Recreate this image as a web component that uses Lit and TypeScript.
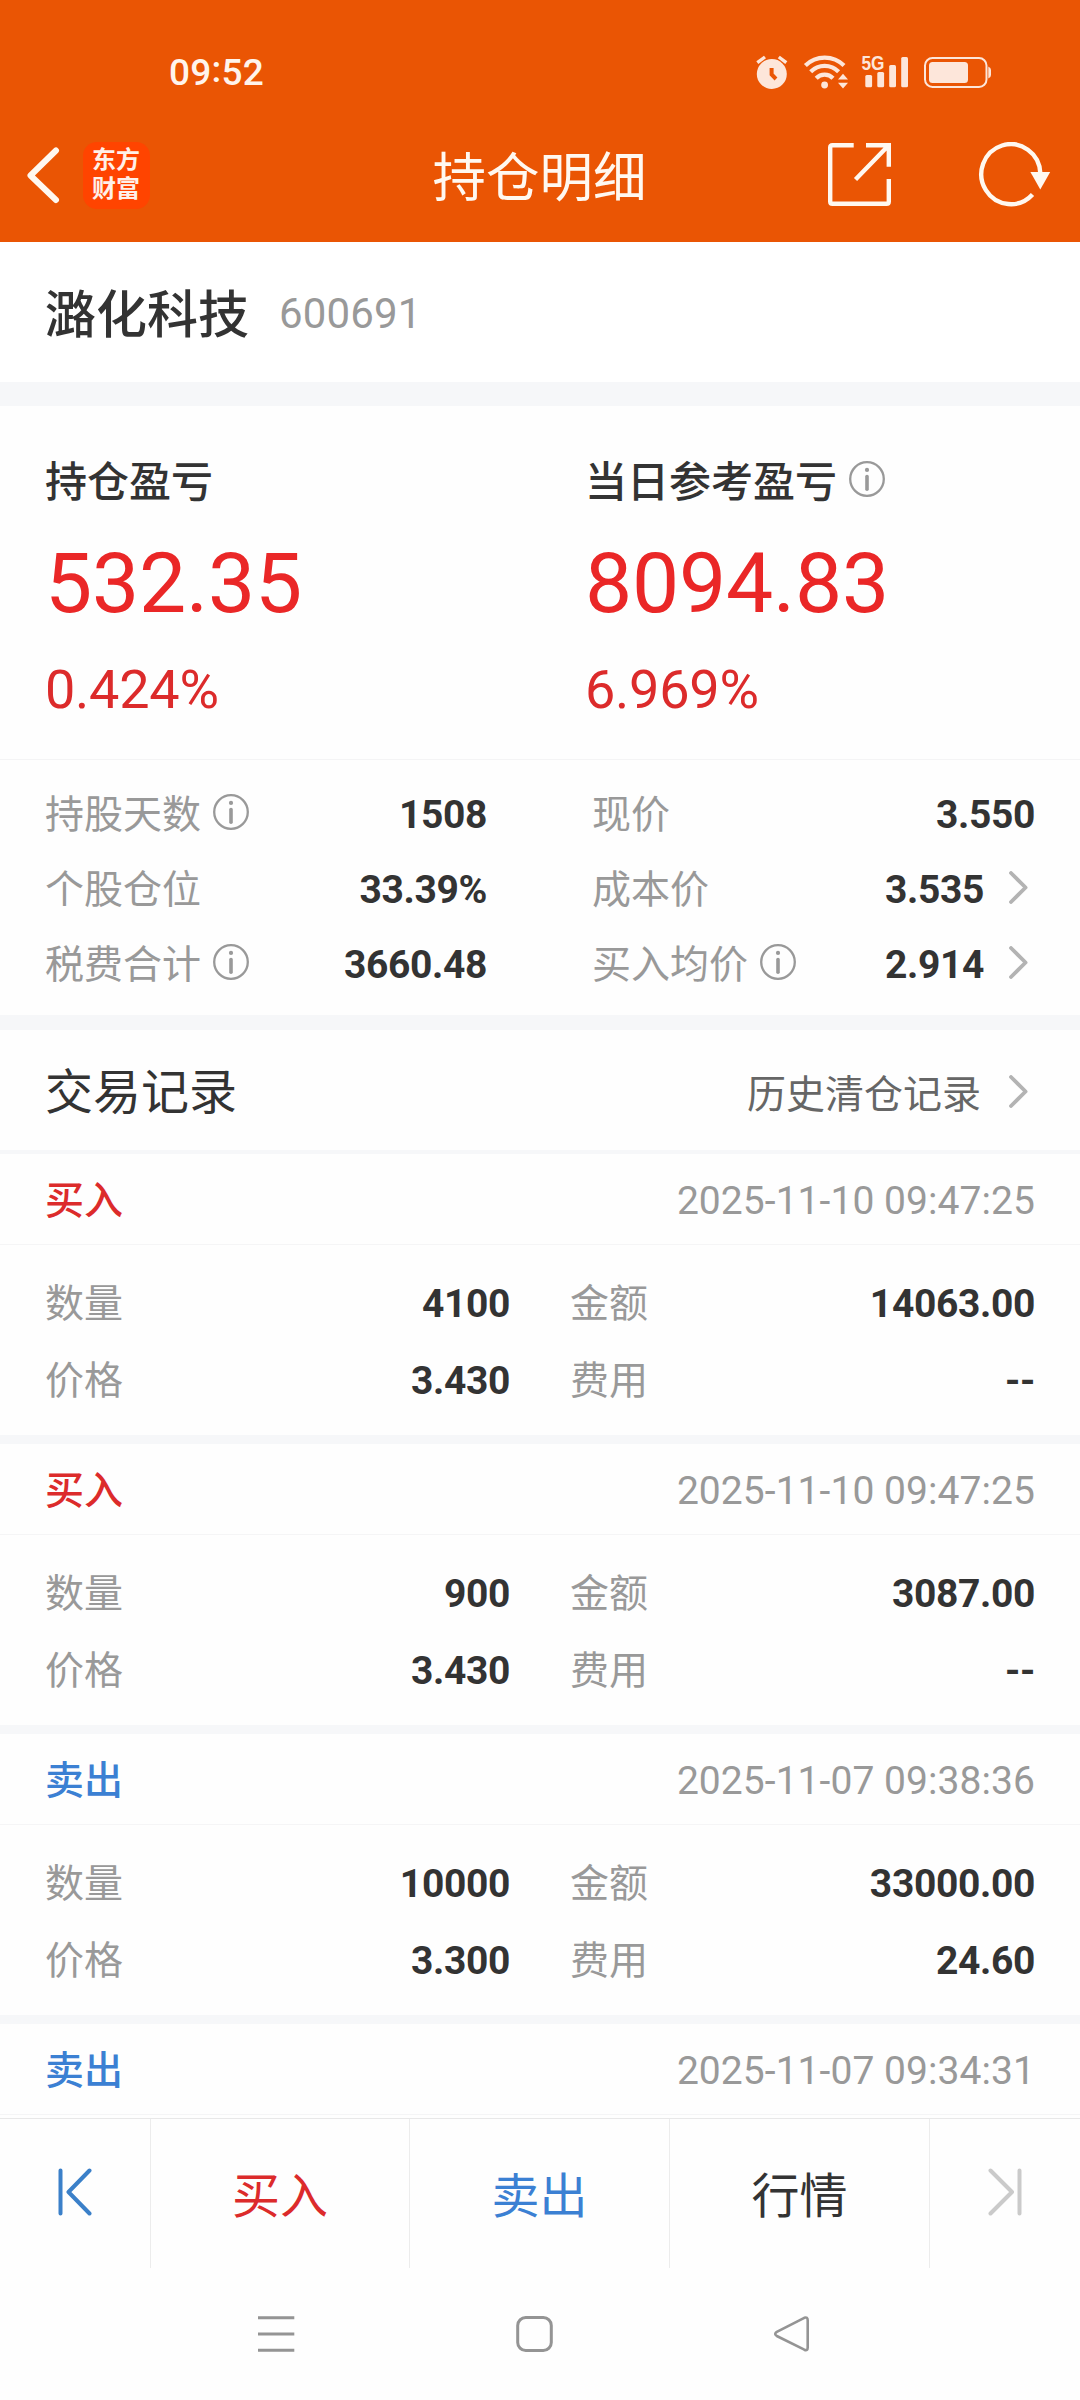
import { LitElement, html, css, svg } from "lit";
import { customElement, property } from "lit/decorators.js";

interface Stat {
  label: string;
  value: string;
  info?: boolean;
  link?: boolean;
}

interface Trade {
  side: "buy" | "sell";
  time: string;
  quantity: string;
  price: string;
  amount: string;
  fee: string;
}

const LEFT_STATS: Stat[] = [
  { label: "持股天数", value: "1508", info: true },
  { label: "个股仓位", value: "33.39%" },
  { label: "税费合计", value: "3660.48", info: true },
];

const RIGHT_STATS: Stat[] = [
  { label: "现价", value: "3.550" },
  { label: "成本价", value: "3.535", link: true },
  { label: "买入均价", value: "2.914", info: true, link: true },
];

const TRADES: Trade[] = [
  { side: "buy", time: "2025-11-10 09:47:25", quantity: "4100", price: "3.430", amount: "14063.00", fee: "--" },
  { side: "buy", time: "2025-11-10 09:47:25", quantity: "900", price: "3.430", amount: "3087.00", fee: "--" },
  { side: "sell", time: "2025-11-07 09:38:36", quantity: "10000", price: "3.300", amount: "33000.00", fee: "24.60" },
  { side: "sell", time: "2025-11-07 09:34:31", quantity: "", price: "", amount: "", fee: "" },
];

const infoIcon = html`<svg class="info" width="36" height="36" viewBox="0 0 36 36" fill="none" stroke="#999">
  <circle cx="18" cy="18" r="16.8" stroke-width="2.3" />
  <circle cx="18" cy="8.9" r="2.1" fill="#999" stroke="none" />
  <path d="M18 15.6V28.2" stroke-width="3.6" stroke-linecap="round" />
</svg>`;

const arrowIcon = html`<svg class="arrow" width="19" height="33" viewBox="0 0 19 33" fill="none">
  <path d="M2 2L16.6 16.5L2 31" stroke="#b3b3b3" stroke-width="3.8" stroke-linecap="round" stroke-linejoin="round" />
</svg>`;

@customElement("status-bar")
class StatusBar extends LitElement {
  static styles = css`
    :host {
      display: flex;
      align-items: center;
      height: 56px;
      padding: 45px 88px 0 169px;
      color: #fff4ec;
    }
    .time {
      font: 500 37px/56px Roboto, "Noto Sans CJK SC", sans-serif;
      letter-spacing: 0.2px;
      flex: 1;
    }
    .colon {
      position: relative;
      top: -3px;
    }
    svg {
      display: block;
    }
    .net {
      font: 700 20px "Liberation Sans", sans-serif;
    }
  `;
  render() {
    return html`
      <span class="time">09<span class="colon">:</span>52</span>
      <svg width="237" height="56" viewBox="755 45 237 56" fill="#fde6da">
        <circle cx="771.8" cy="74" r="15" />
        <path d="M757.3 62.6L765 57M786.3 62.6L778.8 57" stroke="#fde6da" stroke-width="3.4" />
        <path d="M771.6 68V74.5L776 79" stroke="#ea5504" stroke-width="4" fill="none" />
        <g fill="none" stroke="#fde6da" stroke-width="4.2">
          <path d="M805.4 65.5A27.5 27.5 0 0 1 844 65.5" />
          <path d="M810.7 71.8A19.5 19.5 0 0 1 838.6 71.8" />
          <path d="M816.2 78.2A11.5 11.5 0 0 1 833 78.2" />
        </g>
        <circle cx="824.6" cy="85" r="3.4" />
        <path d="M838 79.5L843 73.8L848 79.5ZM838 82.8L843 88.5L848 82.8Z" />
        <text class="net" x="861.5" y="70" textLength="23" lengthAdjust="spacingAndGlyphs">5G</text>
        <rect x="865.3" y="75" width="6.8" height="12.3" rx="1.5" />
        <rect x="877.3" y="72" width="6.8" height="15.3" rx="1.5" />
        <rect x="889.2" y="65" width="6.8" height="22.3" rx="1.5" />
        <rect x="901.2" y="57" width="6.8" height="30.3" rx="1.5" />
        <rect x="925" y="58" width="61.5" height="29" rx="7.5" fill="none" stroke="#fde6da" stroke-width="2" />
        <rect x="929" y="62" width="39" height="21" rx="3.5" />
        <path d="M988.3 66.5Q991 67.5 991 70V75Q991 77.5 988.3 78.5Z" />
      </svg>
    `;
  }
}

@customElement("nav-header")
class NavHeader extends LitElement {
  static styles = css`
    :host {
      display: grid;
      grid-template-columns: 1fr auto 1fr;
      grid-template-rows: 68px;
      align-items: center;
      height: 68px;
      padding: 40px 29px 33px 26px;
      color: #fff8f0;
    }
    svg {
      display: block;
    }
    .left {
      display: flex;
      align-items: center;
      gap: 23px;
    }
    .logo {
      box-sizing: border-box;
      width: 67px;
      height: 67px;
      padding: 3px 1px 0 0;
      border-radius: 14px;
      background: #ff4400;
      color: #fff0e8;
      text-align: center;
      font: 700 24px/29px "Liberation Sans", "Noto Sans CJK SC", sans-serif;
    }
    .title {
      font: 400 53.5px/60px Roboto, "Noto Sans CJK SC", sans-serif;
      padding: 8px 0 0 2px;
    }
    .right {
      display: flex;
      align-items: center;
      justify-content: flex-end;
      gap: 86px;
    }
  `;
  render() {
    return html`
      <div class="left">
        <svg width="34" height="58" viewBox="0 0 34 58" fill="none">
          <path d="M30 4.5L4.5 29.5L30 54" stroke="#fff8f0" stroke-width="6" stroke-linecap="round" stroke-linejoin="round" />
        </svg>
        <div class="logo">东方<br />财富</div>
      </div>
      <div class="title">持仓明细</div>
      <div class="right">
        <svg width="64" height="64" viewBox="828 143 64 64" fill="none" stroke="#fff8f0" stroke-width="4.4">
          <path d="M853.7 145.2H832.5Q830.2 145.2 830.2 147.5V201.5Q830.2 203.8 832.5 203.8H886.5Q888.8 203.8 888.8 201.5V179" />
          <path d="M866 145.2H888.8V166.7M855.5 179.5L888 146" />
        </svg>
        <svg width="73" height="66" viewBox="978 141 73 66" fill="none">
          <path d="M1040.3 172A29.5 30 0 1 0 1032.5 193.5" stroke="#fff8f0" stroke-width="4.4" />
          <path d="M1030.4 171H1050.2L1040.3 188.5Z" fill="#fff8f0" />
        </svg>
      </div>
    `;
  }
}

@customElement("stat-column")
class StatColumn extends LitElement {
  @property({ attribute: false }) stats: Stat[] = [];
  static styles = css`
    :host {
      display: flex;
      flex-direction: column;
      font: 400 39px/75px Roboto, "Noto Sans CJK SC", sans-serif;
      color: #999;
    }
    .row {
      display: flex;
      align-items: center;
      height: 75px;
    }
    .info {
      margin: -7px 0 0 12px;
    }
    .value {
      margin-left: auto;
      font-weight: 700;
      letter-spacing: -0.35px;
      color: #333;
    }
    .arrow {
      margin: -6px 7px 0 25px;
    }
  `;
  render() {
    return this.stats.map(
      (s) => html`<div class="row">
        <span>${s.label}</span>${s.info ? infoIcon : ""}
        <span class="value">${s.value}</span>${s.link ? arrowIcon : ""}
      </div>`,
    );
  }
}

@customElement("trade-card")
class TradeCard extends LitElement {
  @property({ attribute: false }) trade!: Trade;
  static styles = css`
    :host {
      display: block;
      flex: none;
      font: 400 39px/77px Roboto, "Noto Sans CJK SC", sans-serif;
      color: #999;
      border-bottom: 9px solid #f6f7f9;
    }
    .head {
      box-sizing: border-box;
      display: flex;
      align-items: center;
      justify-content: space-between;
      height: 91px;
      padding: 4px 45px 0;
      border-bottom: 1px solid #f5f5f6;
    }
    .side {
      font-weight: 500;
    }
    .time {
      letter-spacing: 0.06px;
    }
    .buy {
      color: #dc2b2b;
    }
    .sell {
      color: #3b80d3;
    }
    .body {
      box-sizing: border-box;
      display: grid;
      grid-template-columns: 1fr 1fr;
      column-gap: 60px;
      height: 190px;
      padding: 21px 45px 0;
      align-content: start;
    }
    .cell {
      display: flex;
      justify-content: space-between;
      height: 77px;
    }
    .value {
      font-weight: 700;
      letter-spacing: -0.35px;
      color: #333;
    }
  `;
  render() {
    const t = this.trade;
    const cells = [
      ["数量", t.quantity],
      ["金额", t.amount],
      ["价格", t.price],
      ["费用", t.fee],
    ];
    return html`
      <div class="head">
        <span class="side ${t.side}">${t.side === "buy" ? "买入" : "卖出"}</span>
        <span class="time">${t.time}</span>
      </div>
      <div class="body">
        ${t.quantity
          ? cells.map(([k, v]) => html`<div class="cell"><span>${k}</span><span class="value">${v}</span></div>`)
          : ""}
      </div>
    `;
  }
}

@customElement("action-bar")
class ActionBar extends LitElement {
  static styles = css`
    :host {
      display: grid;
      grid-template-columns: 151px 259px 260px 260px 150px;
      height: 149px;
      border-top: 1px solid #e8e8e8;
      background: #fefefe;
      font: 400 48px/64px Roboto, "Noto Sans CJK SC", sans-serif;
    }
    .cell {
      display: flex;
      align-items: center;
      justify-content: center;
      border-right: 1px solid #ececec;
      padding-top: 6px;
    }
    .cell:last-child {
      border-right: none;
    }
    .edge {
      padding: 0 0 4px;
    }
    .buy {
      color: #dc2b2b;
    }
    .sell {
      color: #3b80d3;
    }
    .quote {
      color: #333;
    }
  `;
  render() {
    const edge = (color: string, d: string) => html`<svg width="34" height="48" viewBox="0 0 34 48" fill="none">
      ${svg`<path d=${d} stroke=${color} stroke-width="4" stroke-linecap="round" stroke-linejoin="round" />`}
    </svg>`;
    return html`
      <div class="cell edge">${edge("#3b80c9", "M2.5 2.5V45.5M31.5 2.5L10.5 24L31.5 45.5")}</div>
      <div class="cell buy">买入</div>
      <div class="cell sell">卖出</div>
      <div class="cell quote">行情</div>
      <div class="cell edge">${edge("#cacaca", "M31.5 2.5V45.5M2.5 2.5L24 24L2.5 45.5")}</div>
    `;
  }
}

@customElement("system-nav")
class SystemNav extends LitElement {
  static styles = css`
    :host {
      display: flex;
      justify-content: space-between;
      height: 84px;
      padding: 48px 270px 0 258px;
      background: #fefefe;
    }
  `;
  render() {
    return html`
      <svg width="37" height="36" viewBox="0 0 37 36" stroke="#949494" stroke-width="3">
        <path d="M0 1.7H36.3M0 18H36.3M0 34.3H36.3" />
      </svg>
      <svg width="37" height="36" viewBox="0 0 37 36" fill="none" stroke="#949494" stroke-width="3">
        <rect x="1.7" y="1.5" width="33.6" height="33" rx="8" />
      </svg>
      <svg width="36" height="36" viewBox="0 0 36 36" fill="none" stroke="#949494" stroke-width="2.6">
        <path d="M30.3 1.8Q33.7 0.6 33.7 4.3V31.5Q33.7 35.2 30.3 33.7L2.8 20Q-0.3 18 2.8 15.9Z" stroke-linejoin="round" />
      </svg>
    `;
  }
}

@customElement("app-root")
class AppRoot extends LitElement {
  static styles = css`
    :host {
      display: flex;
      flex-direction: column;
      width: 1080px;
      height: 2400px;
      overflow: hidden;
      background: #fefefe;
      font-family: Roboto, "Noto Sans CJK SC", sans-serif;
      color: #333;
    }
    .top {
      background: #ea5504;
      height: 242px;
      flex: none;
    }
    .content {
      flex: 1;
      min-height: 0;
      overflow: hidden;
      display: flex;
      flex-direction: column;
    }
    .content > * {
      box-sizing: border-box;
      flex: none;
    }
    .stock {
      display: flex;
      align-items: center;
      gap: 30px;
      height: 164px;
      padding: 4px 45px 0;
      background: #fff;
      border-bottom: 24px solid #f6f7f9;
    }
    .name {
      font-size: 51px;
      font-weight: 500;
      line-height: 70px;
      padding-top: 4px;
    }
    .code {
      font-size: 42px;
      line-height: 70px;
      letter-spacing: 0.15px;
      color: #999;
    }
    .profit {
      display: grid;
      grid-template-columns: 1fr 1fr;
      height: 354px;
      padding-top: 47px;
      border-bottom: 1px solid #f4f4f5;
    }
    .pnl {
      padding-left: 45px;
    }
    .label {
      display: flex;
      align-items: center;
      height: 60px;
      font-size: 42px;
      line-height: 60px;
      font-weight: 500;
    }
    .label .info {
      margin: -8px 0 0 12px;
    }
    .amount {
      font-size: 84px;
      line-height: 100px;
      margin-top: 21px;
      letter-spacing: -0.2px;
      color: #ea2727;
    }
    .ratio {
      font-size: 54px;
      line-height: 70px;
      margin-top: 21px;
      letter-spacing: -0.25px;
      color: #dc2b2b;
    }
    .stats {
      display: grid;
      grid-template-columns: 442px 443px;
      column-gap: 105px;
      height: 270px;
      padding: 18px 45px 0;
      border-bottom: 15px solid #f6f7f9;
    }
    .records {
      display: flex;
      align-items: center;
      justify-content: space-between;
      height: 124px;
      padding: 0 52px 0 45px;
      border-bottom: 4px solid #f6f7f9;
    }
    .heading {
      font-size: 48px;
      line-height: 70px;
      padding-top: 5px;
    }
    .history {
      display: flex;
      align-items: center;
      gap: 28px;
      padding-top: 9px;
      font-size: 39px;
      line-height: 60px;
      color: #666;
    }
    .history .arrow {
      margin-top: -6px;
    }
  `;
  render() {
    return html`
      <div class="top">
        <status-bar></status-bar>
        <nav-header></nav-header>
      </div>
      <div class="content">
        <div class="stock">
          <span class="name">潞化科技</span>
          <span class="code">600691</span>
        </div>
        <div class="profit">
          <div class="pnl">
            <div class="label">持仓盈亏</div>
            <div class="amount">532.35</div>
            <div class="ratio">0.424%</div>
          </div>
          <div class="pnl">
            <div class="label">当日参考盈亏${infoIcon}</div>
            <div class="amount">8094.83</div>
            <div class="ratio">6.969%</div>
          </div>
        </div>
        <div class="stats">
          <stat-column .stats=${LEFT_STATS}></stat-column>
          <stat-column .stats=${RIGHT_STATS}></stat-column>
        </div>
        <div class="records">
          <span class="heading">交易记录</span>
          <span class="history">历史清仓记录${arrowIcon}</span>
        </div>
        ${TRADES.map((t) => html`<trade-card .trade=${t}></trade-card>`)}
      </div>
      <action-bar></action-bar>
      <system-nav></system-nav>
    `;
  }
}
